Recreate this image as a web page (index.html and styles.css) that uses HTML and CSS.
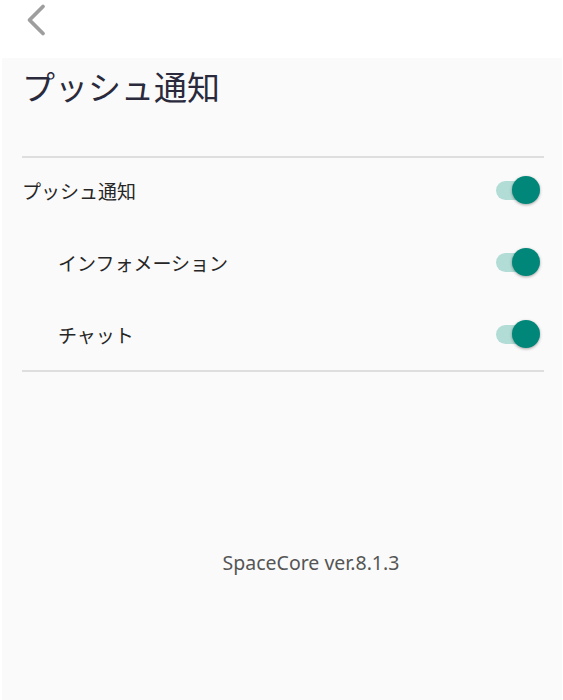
FILE: index.html
```html
<!DOCTYPE html>
<html lang="ja">
<head>
    <meta charset="UTF-8">
    <meta name="viewport" content="width=device-width, initial-scale=1.0">
    <title>プッシュ通知</title>
    <link rel="stylesheet" href="styles.css">
</head>
<body>
    <div class="header">
        <button class="back-button" aria-label="戻る">
            <svg width="24" height="40" viewBox="0 0 24 40">
                <path d="M18 6.5 L4.5 20 L18 33.5" fill="none" stroke="#9e9e9e" stroke-width="3.8" stroke-linecap="round" stroke-linejoin="round"/>
            </svg>
        </button>
    </div>

    <div class="panel">
        <h1 class="page-title">プッシュ通知</h1>

        <div class="settings">
            <div class="setting-row">
                <span class="setting-label">プッシュ通知</span>
                <span class="toggle on"><span class="toggle-knob"></span></span>
            </div>
            <div class="setting-row sub">
                <span class="setting-label">インフォメーション</span>
                <span class="toggle on"><span class="toggle-knob"></span></span>
            </div>
            <div class="setting-row sub">
                <span class="setting-label">チャット</span>
                <span class="toggle on"><span class="toggle-knob"></span></span>
            </div>
        </div>

        <div class="version">SpaceCore ver.8.1.3</div>
    </div>
</body>
</html>
```

FILE: styles.css
```css
body {
    font-family: 'Noto Sans CJK JP', 'Noto Sans', sans-serif;
    margin: 0;
    padding: 0;
    background-color: #fff;
    color: #333;
    height: 700px;
    display: flex;
    flex-direction: column;
    overflow: hidden;
}

.header {
    height: 58px;
    display: flex;
    align-items: flex-start;
}

.back-button {
    margin: 0 0 0 25px;
    padding: 0;
    border: none;
    background: none;
    cursor: pointer;
    height: 40px;
}

.panel {
    flex: 1;
    margin-left: 2px;
    margin-right: 1px;
    background-color: #fafafa;
    padding: 6px 18px 0 20px;
}

.page-title {
    margin: 0 0 48px 0;
    font-size: 33px;
    font-weight: 400;
    line-height: 44px;
    color: #2a2a3c;
}

.settings {
    border-top: 2px solid #dedede;
    border-bottom: 2px solid #dedede;
    display: flex;
    flex-direction: column;
    gap: 8px;
    padding-bottom: 4px;
}

.setting-row {
    height: 64px;
    display: flex;
    align-items: center;
    justify-content: space-between;
}

.setting-row.sub {
    padding-left: 36px;
}

.setting-label {
    font-size: 19px;
    font-weight: 400;
    color: #262626;
}

.toggle {
    position: relative;
    width: 40px;
    height: 19px;
    border-radius: 10px;
    background-color: #b2dcd6;
    margin-right: 8px;
}

.toggle-knob {
    position: absolute;
    top: -5px;
    right: -4px;
    width: 28px;
    height: 28px;
    border-radius: 50%;
    background-color: #00877a;
    box-shadow: 0 1px 3px rgba(0, 0, 0, 0.35);
}

.version {
    margin-top: 177px;
    padding-left: 56px;
    text-align: center;
    font-family: 'Noto Sans', sans-serif;
    font-size: 19.5px;
    color: #555;
}
```
